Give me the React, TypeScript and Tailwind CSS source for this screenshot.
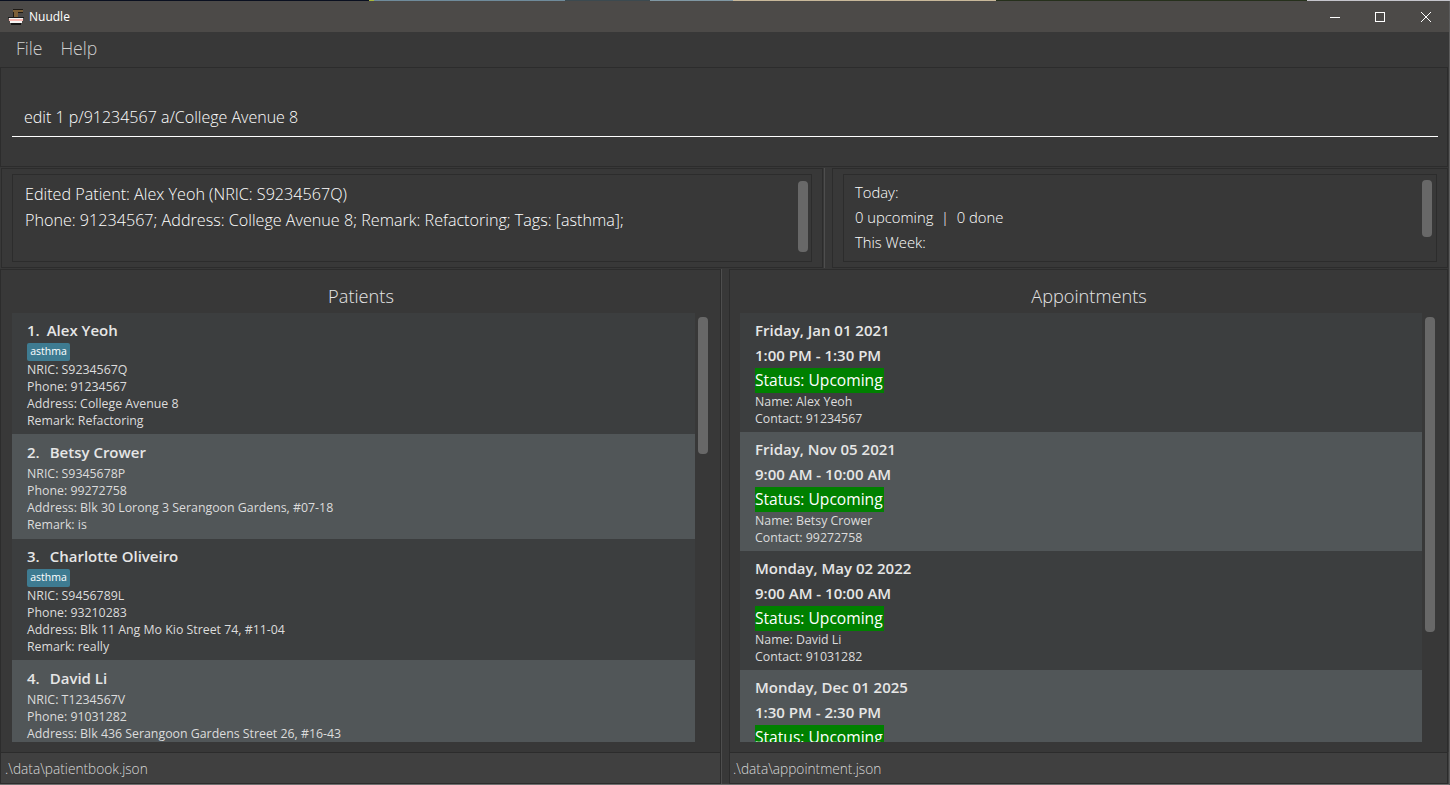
const patients = [
  { no: 1, name: 'Alex Yeoh', tag: 'asthma', nric: 'S9234567Q', phone: '91234567', address: 'College Avenue 8', remark: 'Refactoring' },
  { no: 2, name: 'Betsy Crower', nric: 'S9345678P', phone: '99272758', address: 'Blk 30 Lorong 3 Serangoon Gardens, #07-18', remark: 'is' },
  { no: 3, name: 'Charlotte Oliveiro', tag: 'asthma', nric: 'S9456789L', phone: '93210283', address: 'Blk 11 Ang Mo Kio Street 74, #11-04', remark: 'really' },
  { no: 4, name: 'David Li', nric: 'T1234567V', phone: '91031282', address: 'Blk 436 Serangoon Gardens Street 26, #16-43' },
]

const appointments = [
  { date: 'Friday, Jan 01 2021', time: '1:00 PM - 1:30 PM', name: 'Alex Yeoh', contact: '91234567' },
  { date: 'Friday, Nov 05 2021', time: '9:00 AM - 10:00 AM', name: 'Betsy Crower', contact: '99272758' },
  { date: 'Monday, May 02 2022', time: '9:00 AM - 10:00 AM', name: 'David Li', contact: '91031282' },
  { date: 'Monday, Dec 01 2025', time: '1:30 PM - 2:30 PM' },
]

function NoodleLogo() {
  return (
    <svg width="16" height="16" viewBox="0 0 16 16" className="shrink-0" shapeRendering="crispEdges">
      <rect x="5" y="0" width="10" height="1" fill="#1e1a16" />
      <rect x="5" y="1" width="10" height="2" fill="#7d6038" />
      <rect x="6" y="3" width="4" height="5" fill="#7d6038" />
      <rect x="5" y="3" width="1" height="5" fill="#1e1a16" />
      <rect x="10" y="3" width="5" height="1" fill="#1e1a16" />
      <rect x="0" y="8" width="16" height="1" fill="#1a1a1a" />
      <rect x="1" y="9" width="14" height="1" fill="#f6f6f6" />
      <rect x="1" y="10" width="14" height="2" fill="#f7b7b0" />
      <rect x="2" y="12" width="12" height="2" fill="#f4f4f4" />
      <rect x="3" y="14" width="10" height="2" fill="#161616" />
    </svg>
  )
}

function PatientCard({ patient }: { patient: (typeof patients)[number] }) {
  return (
    <div className={`shrink-0 pl-[15px] ${patient.tag ? 'pb-[5px] pt-[7px]' : 'pb-[6px] pt-[8px]'} ${patient.no % 2 === 0 ? 'bg-[#515658]' : 'bg-[#3c3e3f]'}`}>
      <div className="flex h-[20px] items-center text-[15px] font-semibold text-[#e6e6e6]">
        <span className={patient.no === 1 ? 'mr-[7px]' : 'mr-[10px]'}>{patient.no}.</span>
        <span>{patient.name}</span>
      </div>
      {patient.tag && (
        <div className="mt-[3px] flex h-[18px] w-[43px] items-center justify-center rounded-[2px] bg-[#3e7b91] text-[10.5px] text-white">
          {patient.tag}
        </div>
      )}
      <div className={`${patient.tag ? 'mt-0' : 'mt-[3px]'} text-[12.35px] leading-[17px] text-[#dcdcdc]`}>
        <div>NRIC: {patient.nric}</div>
        <div>Phone: {patient.phone}</div>
        <div className="whitespace-nowrap">Address: {patient.address}</div>
        {patient.remark && <div>Remark: {patient.remark}</div>}
      </div>
    </div>
  )
}

function AppointmentCard({ item, even }: { item: (typeof appointments)[number]; even: boolean }) {
  return (
    <div className={`h-[119px] shrink-0 pl-[15px] pt-[7px] ${even ? 'bg-[#515658]' : 'bg-[#3c3e3f]'}`}>
      <div className="flex h-[20px] items-center text-[15px] font-semibold text-[#e6e6e6]">{item.date}</div>
      <div className="mt-[5px] flex h-[20px] items-center text-[15px] font-semibold text-[#e6e6e6]">{item.time}</div>
      <div className="mt-[3px] flex h-[25px] w-[129px] items-center whitespace-nowrap bg-[#008000] text-[15.6px] font-medium text-white">
        Status: Upcoming
      </div>
      {item.name && (
        <div className="text-[12.35px] leading-[17px] text-[#dcdcdc]">
          <div>Name: {item.name}</div>
          <div>Contact: {item.contact}</div>
        </div>
      )}
    </div>
  )
}

export default function App() {
  return (
    <div className="flex h-[785px] w-[1450px] flex-col overflow-hidden bg-[#383838] font-['Open_Sans','Noto_Sans',sans-serif] text-white">
      {/* wallpaper peeking above the window */}
      <div className="flex h-px shrink-0">
        <div className="w-[369px] bg-[#0a1020]" />
        <div className="w-[5px] bg-[#a8b83a]" />
        <div className="w-[191px] bg-[#6f8b9b]" />
        <div className="w-[85px] bg-[#3c4a50]" />
        <div className="w-[83px] bg-[#7f97a3]" />
        <div className="w-[263px] bg-[#c8b89a]" />
        <div className="w-[311px] bg-[#26301c]" />
        <div className="flex-1 bg-[#c5c5cc]" />
      </div>

      <div className="flex min-h-0 flex-1 flex-col border-r border-[#5c5c5c]">
        {/* title bar */}
        <div className="flex h-[31px] shrink-0 items-center bg-[#4c4a48] pl-[8px] pr-[18px] pt-[1px]">
          <NoodleLogo />
          <span className="ml-[5px] text-[12px] text-white">Nuudle</span>
          <svg width="10" height="10" viewBox="0 0 10 10" className="ml-auto" stroke="#fff" fill="none">
            <path d="M0 5.5H10" />
          </svg>
          <svg width="10" height="10" viewBox="0 0 10 10" className="ml-[35px]" stroke="#fff" fill="none">
            <rect x="0.5" y="0.5" width="9" height="9" />
          </svg>
          <svg width="10" height="10" viewBox="0 0 10 10" className="ml-[36px]" stroke="#fff" fill="none">
            <path d="M0 0L10 10M10 0L0 10" />
          </svg>
        </div>

        {/* menu */}
        <div className="flex h-[35px] shrink-0 items-center gap-[18px] pb-[2px] pl-[16px] text-[17.6px] font-light text-[#cfcfcf]">
          <span>File</span>
          <span>Help</span>
        </div>

        {/* command box */}
        <div className="mr-[1px] flex h-[100px] shrink-0 flex-col justify-end border border-[#2c2c2c] pb-[29px] pl-[11px] pr-[9px]">
          <div className="border-b border-white px-[12px] pb-[8px] text-[16px] font-light leading-[22px] text-white">
            edit 1 p/91234567 a/College Avenue 8
          </div>
        </div>

        {/* result and summary */}
        <div className="mb-[1px] mt-[1px] flex h-[100px] shrink-0 pl-[1px] pr-[1px]">
          <div className="w-[822px] border border-[#2c2c2c] px-[10px] py-[5px]">
            <div className="flex h-full border border-[#2c2c2c] pl-[12px] pr-[3px] pt-[6px]">
              <div className="flex-1 text-[16.15px] font-light leading-[26px] text-white">
                <div>Edited Patient: Alex Yeoh (NRIC: S9234567Q)</div>
                <div className="whitespace-nowrap">Phone: 91234567; Address: College Avenue 8; Remark: Refactoring; Tags: [asthma];</div>
              </div>
              <div className="h-[71px] w-[10px] rounded-[4px] bg-[#686868]" />
            </div>
          </div>
          <div className="ml-[1px] w-[8px] border-l border-[#4e4e4e]" />
          <div className="flex-1 border border-[#2c2c2c] px-[10px] py-[5px]">
            <div className="flex h-full border border-[#2c2c2c] pl-[11px] pr-[4px] pt-[5px]">
              <div className="flex-1 text-[14.8px] font-light leading-[25px] text-white">
                <div>Today:</div>
                <div>0 upcoming &nbsp;|&nbsp; 0 done</div>
                <div>This Week:</div>
              </div>
              <div className="h-[57px] w-[10px] rounded-[4px] bg-[#686868]" />
            </div>
          </div>
        </div>

        {/* lists */}
        <div className="flex min-h-0 flex-1 pr-[1px]">
          <div className="flex w-[721px] flex-col border-x border-t border-[#2c2c2c] px-[11px]">
            <div className="flex h-[43px] shrink-0 items-center justify-center pl-[1px] pt-[11px] text-[18.2px] font-light text-[#e6e6e6]">Patients</div>
            <div className="mb-[10px] flex min-h-0 flex-1">
              <div className="flex w-[683px] flex-col overflow-hidden">
                {patients.map((p) => <PatientCard key={p.no} patient={p} />)}
              </div>
              <div className="ml-[3px] mt-[4px] h-[137px] w-[10px] rounded-[4px] bg-[#686868]" />
            </div>
          </div>
          <div className="w-[8px] border-l border-[#4e4e4e]" />
          <div className="flex flex-1 flex-col border-x border-t border-[#2c2c2c] px-[10px]">
            <div className="flex h-[43px] shrink-0 items-center justify-center pl-[1px] pt-[11px] text-[18.2px] font-light text-[#e6e6e6]">Appointments</div>
            <div className="mb-[10px] flex min-h-0 flex-1">
              <div className="flex w-[682px] flex-col overflow-hidden">
                {appointments.map((a, i) => <AppointmentCard key={a.date} item={a} even={i % 2 === 1} />)}
              </div>
              <div className="ml-[3px] mt-[4px] h-[315px] w-[10px] rounded-[4px] bg-[#686868]" />
            </div>
          </div>
        </div>

        {/* status bars */}
        <div className="flex h-[32px] shrink-0 bg-[#404040] pr-[1px]">
          <div className="flex w-[721px] items-center border border-[#2c2c2c] pl-[4px] pt-[2px] text-[13.7px] font-light text-[#d8d8d8]">.\data\patientbook.json</div>
          <div className="w-[8px] border-l border-[#4e4e4e] bg-[#383838]" />
          <div className="flex flex-1 items-center border border-[#2c2c2c] pl-[3px] pt-[2px] text-[13.7px] font-light text-[#d8d8d8]">.\data\appointment.json</div>
        </div>
        <div className="h-px shrink-0 bg-[#6e6e6e]" />
      </div>
    </div>
  )
}
